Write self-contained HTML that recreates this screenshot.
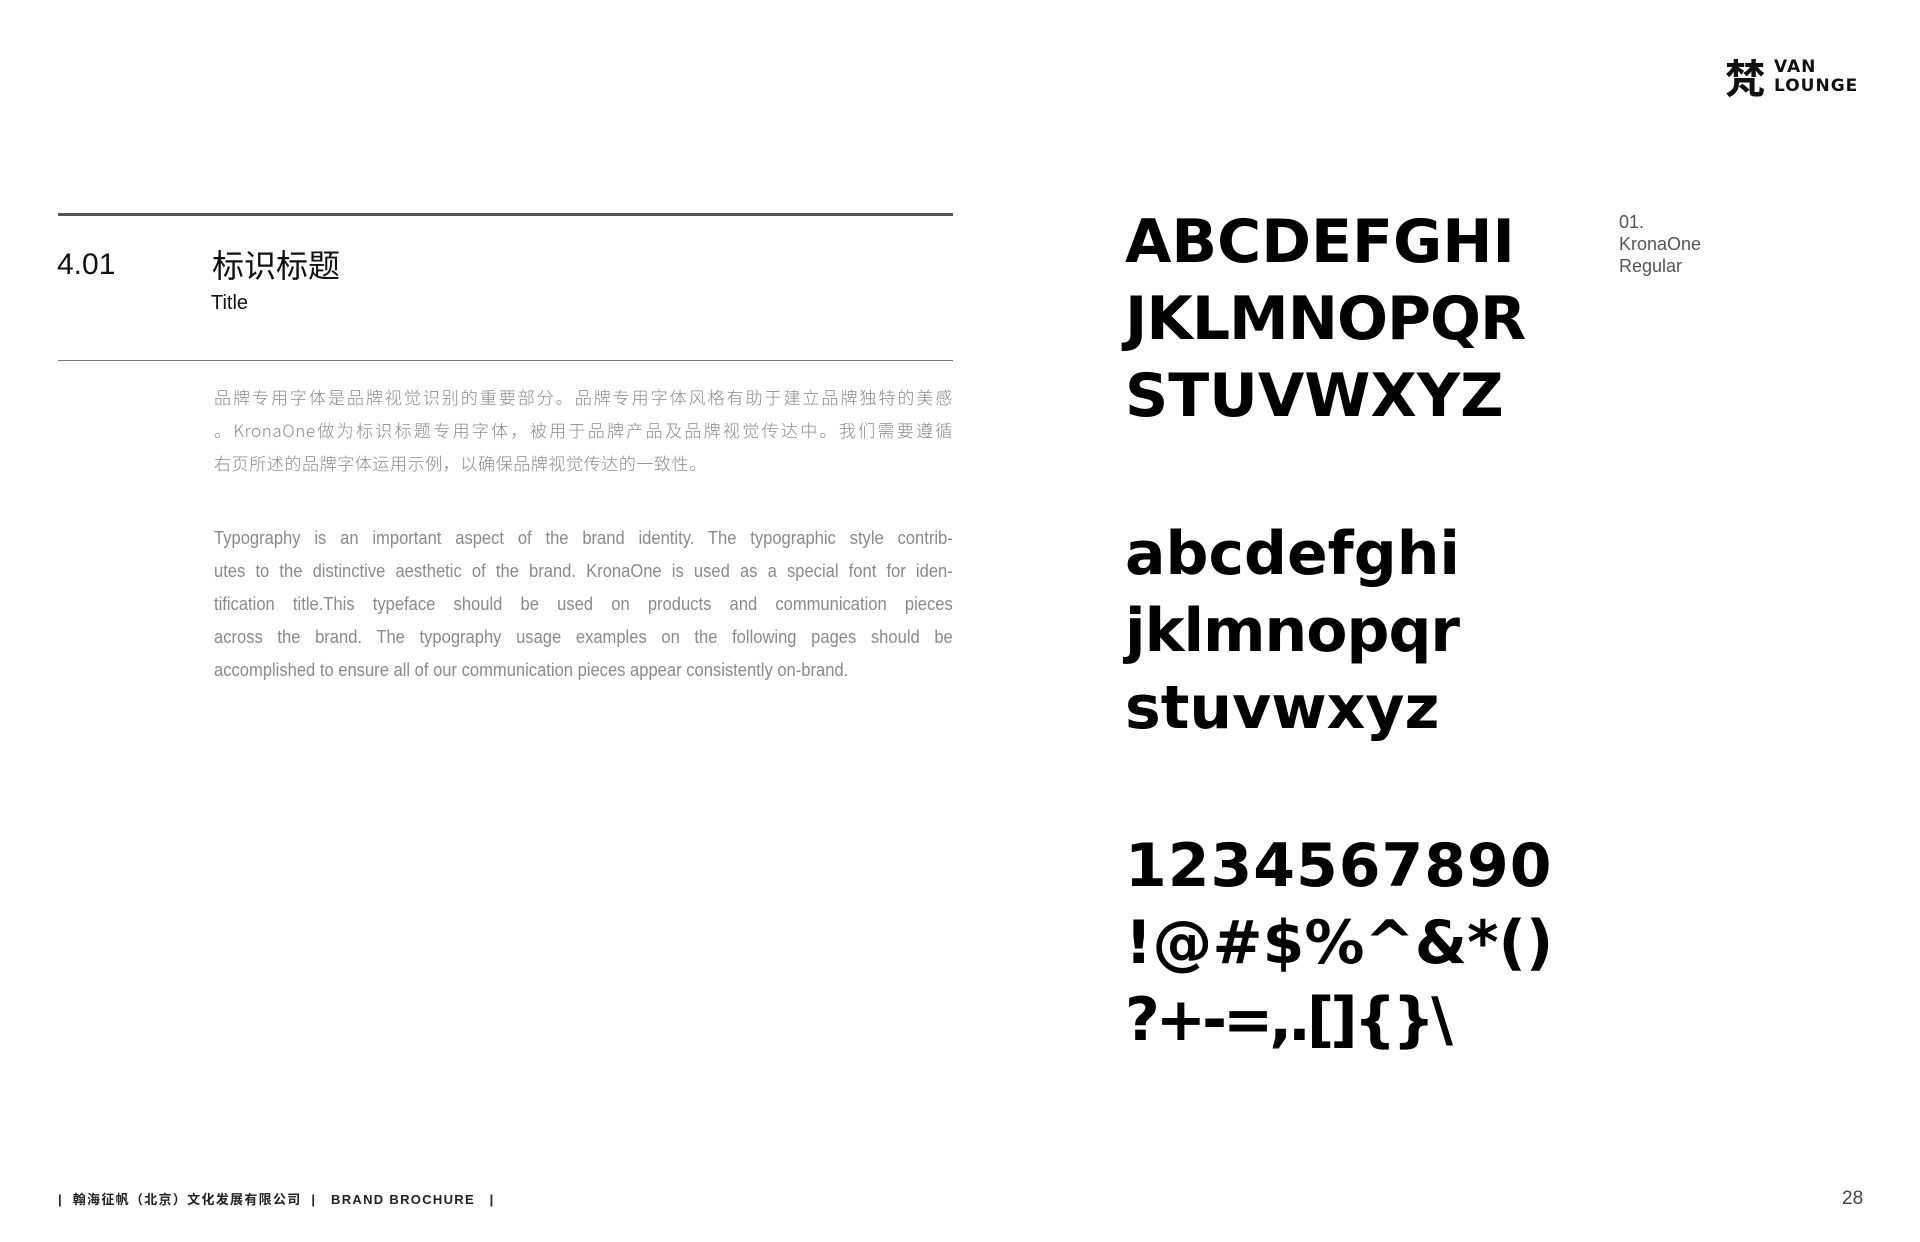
<!DOCTYPE html>
<html><head><meta charset="utf-8"><style>
*{margin:0;padding:0;box-sizing:border-box}
body{width:1920px;height:1242px;background:#fff;position:relative;overflow:hidden;font-family:"Liberation Sans","Noto Sans CJK SC",sans-serif;color:#111}
.a{position:absolute}
.big{font-family:"DejaVu Sans",sans-serif;font-weight:bold;font-size:60px;line-height:77px;color:#000;white-space:nowrap}
.body{color:#8a8a8a;line-height:33px;width:739px;left:214px}
.body span{display:block;white-space:nowrap;text-align:justify;text-align-last:justify;height:33px}
.body span.l{text-align-last:left}
.en{font-size:18px;width:803px;transform:scaleX(0.92);transform-origin:0 0}
.cn{font-family:"Noto Sans CJK SC",sans-serif;font-weight:300;font-size:17px;letter-spacing:0.6px}
</style></head><body>
<div class="a" style="left:1725px;top:54px;font-family:'Noto Sans CJK SC',sans-serif;font-size:40px;font-weight:bold;line-height:44px">梵</div>
<div class="a" style="left:1774px;top:58px;font-family:'DejaVu Sans',sans-serif;font-weight:bold;font-size:17px;line-height:19px;letter-spacing:1px">VAN<br>LOUNGE</div>

<div class="a" style="left:58px;top:213px;width:895px;height:3px;background:#555"></div>
<div class="a" style="left:57px;top:245px;font-size:30px;line-height:40px">4.01</div>
<div class="a" style="left:212px;top:242px;font-size:32px;line-height:44px;font-family:'Noto Sans CJK SC',sans-serif">标识标题</div>
<div class="a" style="left:211px;top:290px;font-size:20px;line-height:26px">Title</div>
<div class="a" style="left:58px;top:360px;width:895px;height:1px;background:#777"></div>

<div class="a body cn" style="top:380px">
<span>品牌专用字体是品牌视觉识别的重要部分。品牌专用字体风格有助于建立品牌独特的美感</span>
<span>。KronaOne做为标识标题专用字体，被用于品牌产品及品牌视觉传达中。我们需要遵循</span>
<span class="l">右页所述的品牌字体运用示例，以确保品牌视觉传达的一致性。</span>
</div>
<div class="a body en" style="top:522px">
<span>Typography is an important aspect of the brand identity. The typographic style contrib-</span>
<span>utes to the distinctive aesthetic of the brand. KronaOne is used as a special font for iden-</span>
<span>tification title.This typeface should be used on products and communication pieces</span>
<span>across the brand. The typography usage examples on the following pages should be</span>
<span class="l">accomplished to ensure all of our communication pieces appear consistently on-brand.</span>
</div>

<div class="a big" style="left:1125px;top:204px">ABCDEFGHI<br><span style="letter-spacing:-1px">JKLMNOPQR</span><br>STUVWXYZ</div>
<div class="a big" style="left:1125px;top:516px">abcdefghi<br><span style="letter-spacing:-1px">jklmnopqr</span><br>stuvwxyz</div>
<div class="a big" style="left:1125px;top:828px"><span style="letter-spacing:1px">1234567890</span><br>!@#$%^&amp;*()<br><span style="letter-spacing:-4px">?+-=,.[]{}\</span></div>

<div class="a" style="left:1619px;top:211px;font-size:18px;line-height:22px;color:#555">01.<br>KronaOne<br>Regular</div>

<div class="a" style="left:58px;top:1191px;font-size:13px;font-weight:bold;letter-spacing:1.3px;line-height:18px;white-space:pre;color:#222">|  翰海征帆（北京）文化发展有限公司  |   BRAND BROCHURE   |</div>
<div class="a" style="left:1842px;top:1188px;font-size:19px;color:#444">28</div>
</body></html>
